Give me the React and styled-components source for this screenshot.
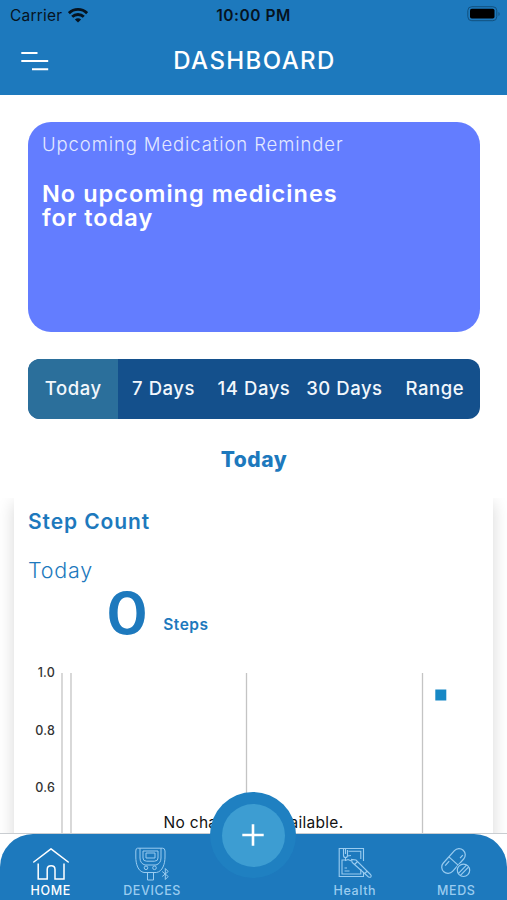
import { useState } from 'react';
import styled, { createGlobalStyle } from 'styled-components';

const RANGES = ['Today', '7 Days', '14 Days', '30 Days', 'Range'];
const GRID_LINES = [48, 57, 232.5, 408.5];
const Y_TICKS = [
  { label: '1.0', y: 17 },
  { label: '0.8', y: 75 },
  { label: '0.6', y: 132 },
];

export default function App() {
  const [range, setRange] = useState('Today');
  const [tab, setTab] = useState('HOME');

  return (
    <Screen>
      <GlobalStyle />
      <Header>
        <StatusBar>
          <Carrier>
            Carrier <WifiIcon />
          </Carrier>
          <Clock>10:00 PM</Clock>
          <Battery>
            <BatteryIcon />
          </Battery>
        </StatusBar>
        <TitleBar>
          <MenuButton type="button" aria-label="Menu">
            <MenuIcon />
          </MenuButton>
          <Title>DASHBOARD</Title>
        </TitleBar>
      </Header>

      <Overview>
        <Reminder>
          <ReminderLabel>Upcoming Medication Reminder</ReminderLabel>
          <ReminderText>
            No upcoming medicines
            <br />
            for today
          </ReminderText>
        </Reminder>
        <Segments>
          {RANGES.map((name) => (
            <Segment key={name} type="button" $active={name === range} onClick={() => setRange(name)}>
              {name}
            </Segment>
          ))}
        </Segments>
        <RangeTitle>{range}</RangeTitle>
      </Overview>

      <Cards>
        <Card>
          <CardTitle>Step Count</CardTitle>
          <CardRange>{range}</CardRange>
          <StepRow>
            <StepValue>0</StepValue>
            <StepUnit>Steps</StepUnit>
          </StepRow>
          <StepChart />
        </Card>
      </Cards>

      <Footer>
        <TabBar>
          <Tab type="button" $active={tab === 'HOME'} onClick={() => setTab('HOME')}>
            <HomeIcon />
            <TabLabel>HOME</TabLabel>
          </Tab>
          <Tab type="button" $active={tab === 'DEVICES'} onClick={() => setTab('DEVICES')}>
            <DeviceIcon />
            <TabLabel>DEVICES</TabLabel>
          </Tab>
          <AddSlot>
            <AddButton type="button" aria-label="Add">
              <AddDisc>
                <PlusIcon />
              </AddDisc>
            </AddButton>
          </AddSlot>
          <Tab type="button" $active={tab === 'Health'} onClick={() => setTab('Health')}>
            <HealthIcon />
            <TabLabel>Health</TabLabel>
          </Tab>
          <Tab type="button" $active={tab === 'MEDS'} onClick={() => setTab('MEDS')}>
            <MedsIcon />
            <TabLabel>MEDS</TabLabel>
          </Tab>
        </TabBar>
      </Footer>
    </Screen>
  );
}

function StepChart() {
  return (
    <Chart width="479" height="200" viewBox="0 0 479 200">
      {GRID_LINES.map((x) => (
        <line key={x} x1={x} x2={x} y1="13" y2="200" stroke="#c4c4c4" strokeWidth="1.3" />
      ))}
      {Y_TICKS.map((tick) => (
        <ChartTick key={tick.label} x="41" y={tick.y} textAnchor="end">
          {tick.label}
        </ChartTick>
      ))}
      <rect x="421.3" y="29.5" width="11" height="11" fill="#1788c5" />
      <ChartMessage x="239.5" y="168" textAnchor="middle">
        No chart data available.
      </ChartMessage>
    </Chart>
  );
}

function WifiIcon() {
  return (
    <svg width="20" height="15" viewBox="0 0 20 15" fill="none" stroke="#06131f" strokeWidth="2.8">
      <path d="M0.9 5.2C6 .2 14 .2 19.1 5.2" />
      <path d="M4.2 8.8C7.4 5.7 12.6 5.7 15.8 8.8" />
      <path d="M10 14.6L6.9 11.5C8.6 9.9 11.4 9.9 13.1 11.5Z" fill="#06131f" stroke="none" />
    </svg>
  );
}

function BatteryIcon() {
  return (
    <svg width="34" height="16" viewBox="0 0 34 16">
      <rect x="0.8" y="0.7" width="29" height="14" rx="4" fill="none" stroke="#12507e" strokeWidth="1" />
      <rect x="3" y="2.8" width="24.5" height="9.8" rx="1.8" fill="#000" />
      <path d="M31.5 6v4c1.5-.6 1.5-3.4 0-4z" fill="#12507e" />
    </svg>
  );
}

function MenuIcon() {
  return (
    <svg width="28" height="20" viewBox="0 0 28 20" stroke="#fff" strokeWidth="2">
      <path d="M0.3 2H16.5M0.3 10H27.2M11 18.3H27.2" />
    </svg>
  );
}

function PlusIcon() {
  return (
    <svg width="22" height="22" viewBox="0 0 22 22" stroke="#fff" strokeWidth="2.6">
      <path d="M11 0.3V21.7M0.3 11H21.7" />
    </svg>
  );
}

function HomeIcon() {
  return (
    <svg width="36" height="34" viewBox="0 0 36 34" fill="none" stroke="currentColor" strokeWidth="1.5">
      <path d="M0.8 15L18 1.8L35.2 15" strokeLinecap="round" strokeLinejoin="round" />
      <path d="M5.2 16.5V32H14.2V22.5C14.2 17.6 22 17.6 22 22.5V32H31V16.5" />
    </svg>
  );
}

function DeviceIcon() {
  return (
    <svg width="36" height="34" viewBox="0 0 36 34" fill="none" stroke="currentColor" strokeWidth="1">
      <path d="M3.5 1.2H28.5Q31 1.2 31 4V10C31 17 28.5 24.5 22.5 25.5H10C4 24.5 1.8 17 1.8 10V4Q1.8 1.2 3.5 1.2Z" />
      <path d="M6 1.2V11C6 15 8 17 11 18H22C25 17 27 15 27 11V1.2" />
      <path d="M9 4H24V11Q24 14.2 20.5 14.2H12.5Q9 14.2 9 11Z" />
      <path d="M12 6H21V11H12Z" />
      <circle cx="12" cy="20.8" r="1.8" />
      <circle cx="20.5" cy="20.8" r="1.8" />
      <path d="M13.5 25.5V33H19.5V25.5" />
      <path d="M28.2 24.5L34.2 29.5L31.3 32.5V21.5L34.2 24.5L28.2 29.5" />
    </svg>
  );
}

function HealthIcon() {
  return (
    <svg width="36" height="34" viewBox="0 0 36 34" fill="none" stroke="currentColor" strokeWidth="1.1">
      <path d="M26.5 14V1.5H2.2V29.5H26.5V25" />
      <path d="M11.5 4.2H23.8V12M23.8 22V27H5V13H8.5" />
      <path d="M6.5 1.5V8.5Q6.5 10.5 8.5 10.5T10.5 8.5V3M8.5 1.5V7M8.5 10.5V13.5L11 12.5L14.5 14M10.5 9L14 8.5" />
      <path d="M17.5 17.5L31.5 30C34 31 35 29 33.5 27.5L19 13L14.5 12.5L15.2 15.5ZM17.5 17.5L20.5 14.5M27.5 26.5L30.5 24" />
      <path d="M7.5 21H10M7.5 24H12.5" />
    </svg>
  );
}

function MedsIcon() {
  return (
    <svg width="36" height="34" viewBox="0 0 36 34" fill="none" stroke="currentColor" strokeWidth="1.2">
      <g transform="rotate(42 15.5 14)">
        <rect x="9.3" y="-0.5" width="12.4" height="29" rx="6.2" />
        <path d="M9.3 14H21.7M12.4 17V23M18.5 3.5V7.5" />
      </g>
      <circle cx="25.5" cy="23.3" r="7.5" fill="#1d79bd" stroke="none" />
      <circle cx="25.5" cy="23.3" r="6.2" />
      <path d="M20.5 26.3L28.5 18.2M22.4 28.4L30.5 20.2" />
    </svg>
  );
}

const GlobalStyle = createGlobalStyle`
  body {
    margin: 0;
    background: #fff;
  }

  button {
    margin: 0;
    padding: 0;
    border: none;
    background: none;
    font: inherit;
    color: inherit;
  }
`;

const Screen = styled.div`
  position: relative;
  display: flex;
  flex-direction: column;
  width: 507px;
  height: 900px;
  overflow: hidden;
  background: #fff;
  font-family: Inter, 'Liberation Sans', sans-serif;
`;

const Header = styled.header`
  height: 95px;
  flex: none;
  background: #1d79bd;
`;

const StatusBar = styled.div`
  display: grid;
  grid-template-columns: 1fr auto 1fr;
  align-items: center;
  height: 30px;
  padding: 0 6px 0 10px;
  box-sizing: border-box;
  color: #06131f;
`;

const Carrier = styled.div`
  display: flex;
  align-items: center;
  gap: 6px;
  font-size: 15.5px;
  letter-spacing: 0.2px;
`;

const Clock = styled.div`
  margin-right: 4px;
  font-size: 15.5px;
  font-weight: 600;
  letter-spacing: 0.5px;
`;

const Battery = styled.div`
  display: flex;
  justify-content: flex-end;
  padding-bottom: 2px;
`;

const TitleBar = styled.div`
  display: grid;
  grid-template-columns: 50px 1fr 50px;
  align-items: center;
  height: 62px;
  padding: 0 21px;
`;

const MenuButton = styled.button`
  display: flex;
`;

const Title = styled.h1`
  margin: 0;
  padding: 0 0 1px 2px;
  color: #fff;
  font-size: 24px;
  font-weight: 500;
  letter-spacing: 1.4px;
  text-align: center;
`;

const Overview = styled.section`
  height: 403px;
  flex: none;
  padding: 27px 27px 0 28px;
  box-sizing: border-box;
`;

const Reminder = styled.div`
  height: 210px;
  padding: 11px 14px;
  border-radius: 23px;
  background: #637dff;
  box-sizing: border-box;
`;

const ReminderLabel = styled.div`
  color: #e4e9ff;
  font-size: 18.5px;
  font-weight: 300;
  line-height: 23px;
  letter-spacing: 0.9px;
  white-space: nowrap;
`;

const ReminderText = styled.div`
  margin-top: 26px;
  color: #fff;
  font-size: 23.5px;
  font-weight: 600;
  line-height: 24px;
  letter-spacing: 1.02px;
  white-space: nowrap;
`;

const Segments = styled.div`
  display: grid;
  grid-template-columns: repeat(5, 1fr);
  height: 60px;
  margin-top: 27px;
  border-radius: 12px;
  background: #14508c;
  overflow: hidden;
`;

const Segment = styled.button`
  padding-bottom: 2px;
  background: ${({ $active }) => ($active ? '#2b6f9b' : 'transparent')};
  color: #f2f7fc;
  font-size: 18.5px;
  font-weight: 500;
  letter-spacing: 0.55px;
  white-space: nowrap;
`;

const RangeTitle = styled.h2`
  margin: 27px 0 0;
  color: #1d79bd;
  font-size: 21px;
  font-weight: 800;
  line-height: 28px;
  letter-spacing: 0.5px;
  text-align: center;
`;

const Cards = styled.section`
  flex: 1;
  padding: 0 14px;
  overflow: hidden;
`;

const Card = styled.article`
  height: 460px;
  background: #fff;
  box-shadow: 0 5px 16px rgba(0, 0, 0, 0.16);
`;

const CardTitle = styled.h3`
  margin: 0;
  padding: 10px 14px 0;
  color: #1d79bd;
  font-size: 21px;
  font-weight: 600;
  line-height: 28px;
  letter-spacing: 0.9px;
`;

const CardRange = styled.div`
  padding: 20px 14px 0;
  color: #1d79bd;
  font-size: 21.5px;
  font-weight: 300;
  line-height: 28px;
  letter-spacing: 0.8px;
`;

const StepRow = styled.div`
  display: flex;
  align-items: flex-start;
  gap: 17px;
  height: 76px;
  padding-left: 94px;
  color: #1d79bd;
`;

const StepValue = styled.span`
  font-size: 58px;
  font-weight: 600;
  line-height: 59px;
  transform: scaleX(1.1);
`;

const StepUnit = styled.span`
  margin-top: 31px;
  font-size: 15.5px;
  font-weight: 600;
  line-height: 20px;
  letter-spacing: 0.5px;
`;

const Chart = styled.svg`
  display: block;
`;

const ChartTick = styled.text`
  fill: #333;
  font-size: 12.5px;
  font-weight: 500;
  letter-spacing: 0.2px;
`;

const ChartMessage = styled.text`
  fill: #111;
  font-size: 15.5px;
  letter-spacing: 0.3px;
`;

const Footer = styled.footer`
  position: absolute;
  left: 0;
  right: 0;
  bottom: 0;
  border-top: 1px solid #c9cdd1;
  background: #fff;
`;

const TabBar = styled.nav`
  display: grid;
  grid-template-columns: repeat(5, 1fr);
  height: 66px;
  border-radius: 33px 33px 0 0;
  background: #1d79bd;
`;

const Tab = styled.button`
  display: flex;
  flex-direction: column;
  align-items: center;
  justify-content: flex-start;
  padding-top: 13px;
  color: ${({ $active }) => ($active ? '#fff' : '#9accf0')};
`;

const TabLabel = styled.span`
  margin-top: 1px;
  font-size: 12.5px;
  font-weight: 500;
  line-height: 17px;
  letter-spacing: 0.6px;
`;

const AddSlot = styled.div`
  display: flex;
  justify-content: center;
`;

const AddButton = styled.button`
  display: flex;
  align-items: center;
  justify-content: center;
  flex: none;
  width: 86px;
  height: 86px;
  margin-top: -42px;
  border-radius: 50%;
  background: #1f80c1;
`;

const AddDisc = styled.span`
  display: flex;
  align-items: center;
  justify-content: center;
  width: 63px;
  height: 63px;
  border-radius: 50%;
  background: #3d9dd2;
`;
